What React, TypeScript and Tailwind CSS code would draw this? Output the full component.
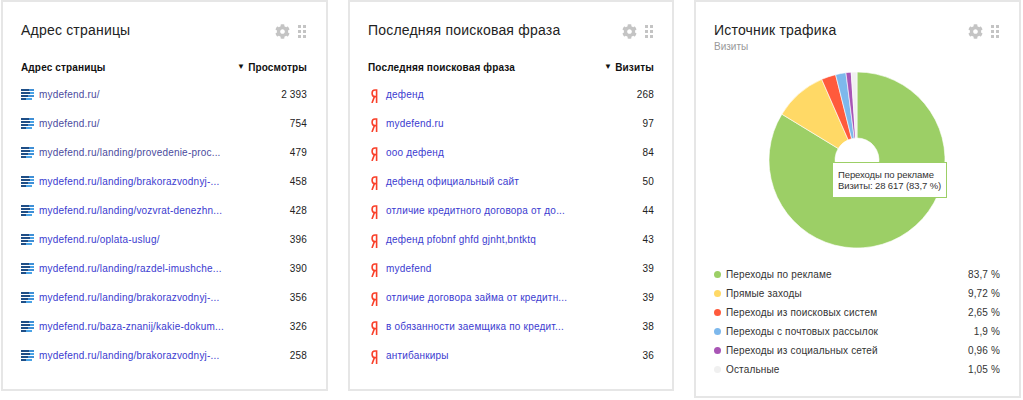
import React from 'react';
import { FaCog } from 'react-icons/fa';

const PAGES = [
  { label: 'mydefend.ru/', value: '2 393', visited: true },
  { label: 'mydefend.ru/', value: '754', visited: true },
  { label: 'mydefend.ru/landing/provedenie-proc...', value: '479', visited: true },
  { label: 'mydefend.ru/landing/brakorazvodnyj-...', value: '458', visited: false },
  { label: 'mydefend.ru/landing/vozvrat-denezhn...', value: '428', visited: false },
  { label: 'mydefend.ru/oplata-uslug/', value: '396', visited: false },
  { label: 'mydefend.ru/landing/razdel-imushche...', value: '390', visited: false },
  { label: 'mydefend.ru/landing/brakorazvodnyj-...', value: '356', visited: false },
  { label: 'mydefend.ru/baza-znanij/kakie-dokum...', value: '326', visited: false },
  { label: 'mydefend.ru/landing/brakorazvodnyj-...', value: '258', visited: false },
];

const PHRASES = [
  { label: 'дефенд', value: '268' },
  { label: 'mydefend.ru', value: '97' },
  { label: 'ооо дефенд', value: '84' },
  { label: 'дефенд официальный сайт', value: '50' },
  { label: 'отличие кредитного договора от до...', value: '44' },
  { label: 'дефенд pfobnf ghfd gjnht,bntktq', value: '43' },
  { label: 'mydefend', value: '39' },
  { label: 'отличие договора займа от кредитн...', value: '39' },
  { label: 'в обязанности заемщика по кредит...', value: '38' },
  { label: 'антибанкиры', value: '36' },
];

const SOURCES = [
  { label: 'Переходы по рекламе', value: '83,7 %', share: 83.7, color: '#9ccf66', dot: 'bg-[#9ccf66]' },
  { label: 'Прямые заходы', value: '9,72 %', share: 9.72, color: '#ffd966', dot: 'bg-[#ffd966]' },
  { label: 'Переходы из поисковых систем', value: '2,65 %', share: 2.65, color: '#ff5a3c', dot: 'bg-[#ff5a3c]' },
  { label: 'Переходы с почтовых рассылок', value: '1,9 %', share: 1.9, color: '#7db8ec', dot: 'bg-[#7db8ec]' },
  { label: 'Переходы из социальных сетей', value: '0,96 %', share: 0.96, color: '#a855b5', dot: 'bg-[#a855b5]' },
  { label: 'Остальные', value: '1,05 %', share: 1.05, color: '#f0f0f0', dot: 'bg-[#f0f0f0]' },
];

const CardTools = () => (
  <div className="flex items-center gap-[8px] mt-[2px] mr-[1px] text-[#c4c4c4]">
    <FaCog className="w-[15px] h-[15px]" />
    <svg width="8" height="13" viewBox="0 0 8 13" fill="currentColor">
      <rect x="0" y="0" width="3" height="3" />
      <rect x="5" y="0" width="3" height="3" />
      <rect x="0" y="5" width="3" height="3" />
      <rect x="5" y="5" width="3" height="3" />
      <rect x="0" y="10" width="3" height="3" />
      <rect x="5" y="10" width="3" height="3" />
    </svg>
  </div>
);

const LinesIcon = () => (
  <svg width="13" height="12" viewBox="0 0 13 12" className="shrink-0 mt-[1px]">
    <rect x="0" y="0" width="8" height="2" fill="#1f4e86" />
    <rect x="8" y="0" width="5" height="2" fill="#3f8fd6" />
    <rect x="0" y="3" width="9" height="2" fill="#1f4e86" />
    <rect x="9" y="3" width="4" height="2" fill="#4aa3e6" />
    <rect x="0" y="6" width="7" height="2" fill="#1f4e86" />
    <rect x="7" y="6" width="6" height="2" fill="#3f8fd6" />
    <rect x="0" y="9" width="5" height="2" fill="#1f4e86" />
    <rect x="5" y="9" width="6" height="2" fill="#4aa3e6" />
  </svg>
);

const YandexIcon = () => (
  <svg width="7" height="14" viewBox="0 0 7 14" className="shrink-0 ml-[3px] mt-[2px]" fill="none" stroke="#f9402a" strokeWidth="1.6">
    <path d="M5.6 14V1H4C2.2 1 1.1 2.2 1.1 4.2S2.2 7.6 4 7.6H5.6M3.4 7.6 1 14" />
  </svg>
);

const Row = ({ icon, label, value, color }: { icon: React.ReactNode; label: string; value: string; color: string }) => (
  <div className="flex items-center justify-between h-[29px]">
    <div className={`flex items-center min-w-0 text-[10px] tracking-[0.2px] ${color}`}>
      <span className="w-[18px] flex shrink-0">{icon}</span>
      <span className="whitespace-nowrap">{label}</span>
    </div>
    <span className="text-[10px] tracking-[0.15px] text-[#222]">{value}</span>
  </div>
);

const TableCard = ({ title, metric, children, className }: { title: string; metric: string; children: React.ReactNode; className: string }) => (
  <section className={`border-2 border-[#e6e6e6] bg-white pt-[19px] pl-[18px] ${className}`}>
    <div className="flex items-center justify-between h-[18px]">
      <h2 className="text-[14px] font-normal text-[#222] tracking-[0.2px]">{title}</h2>
      <CardTools />
    </div>
    <div className="flex items-center justify-between mt-[20px] h-[16px] text-[10px] font-bold text-[#111] tracking-[0.15px]">
      <span>{title}</span>
      <span className="flex items-center gap-[3px]">
        <span className="text-[8px]">▼</span>
        {metric}
      </span>
    </div>
    <div className="mt-[5px]">{children}</div>
  </section>
);

// pie slices go clockwise from twelve o'clock
const polar = (cx: number, cy: number, r: number, pct: number) => {
  const a = (pct / 100) * Math.PI * 2 - Math.PI / 2;
  return [cx + r * Math.cos(a), cy + r * Math.sin(a)];
};

const Pie = () => {
  const total = SOURCES.reduce((s, x) => s + x.share, 0);
  let acc = 0;
  return (
    <svg width="178" height="178" viewBox="0 0 178 178">
      {SOURCES.map((s) => {
        const from = (acc / total) * 100;
        acc += s.share;
        const to = (acc / total) * 100;
        const [x1, y1] = polar(89, 89, 88, from);
        const [x2, y2] = polar(89, 89, 88, to);
        const [x3, y3] = polar(89, 89, 22, to);
        const [x4, y4] = polar(89, 89, 22, from);
        const large = to - from > 50 ? 1 : 0;
        return (
          <path
            key={s.label}
            d={`M${x1} ${y1}A88 88 0 ${large} 1 ${x2} ${y2}L${x3} ${y3}A22 22 0 ${large} 0 ${x4} ${y4}Z`}
            fill={s.color}
            stroke="#fff"
            strokeWidth="0.6"
          />
        );
      })}
    </svg>
  );
};

export default function App() {
  return (
    <div className="w-[1023px] h-[400px] bg-white overflow-hidden flex items-start gap-[20px] pl-[1px] font-['Liberation_Sans',Arial,sans-serif]">
      <TableCard title="Адрес страницы" metric="Просмотры" className="w-[327px] h-[391px] pr-[19px]">
        {PAGES.map((p, i) => (
          <Row key={i} icon={<LinesIcon />} label={p.label} value={p.value} color={p.visited ? 'text-[#4b4b9e]' : 'text-[#3b3bd0]'} />
        ))}
      </TableCard>
      <TableCard title="Последняя поисковая фраза" metric="Визиты" className="w-[326px] h-[391px] pr-[18px]">
        {PHRASES.map((p, i) => (
          <Row key={i} icon={<YandexIcon />} label={p.label} value={p.value} color="text-[#3b3bd0]" />
        ))}
      </TableCard>
      <section className="w-[327px] h-[398px] border-2 border-[#e6e6e6] bg-white pt-[19px] pl-[18px] pr-[19px]">
        <div className="flex items-center justify-between h-[18px]">
          <h2 className="text-[14px] font-normal text-[#222] tracking-[0.2px]">Источник трафика</h2>
          <CardTools />
        </div>
        <div className="text-[10px] text-[#999] mt-[1px] h-[14px] leading-[14px]">Визиты</div>
        <div className="relative flex justify-center mt-[17px] h-[178px]">
          <Pie />
          <div className="absolute left-[118px] top-[91px] w-[115px] h-[36px] bg-white border border-[#9ccf66] pl-[5px] pt-[6px] text-[9.5px] tracking-[-0.1px] leading-[11px] text-[#333] whitespace-nowrap">
            <div>Переходы по рекламе</div>
            <div>Визиты: 28 617 (83,7 %)</div>
          </div>
        </div>
        <div className="mt-[16px]">
          {SOURCES.map((s) => (
            <div key={s.label} className="flex items-center justify-between h-[19px] text-[10px] tracking-[0.15px] text-[#333]">
              <div className="flex items-center gap-[5px]">
                <span className={`w-[7px] h-[7px] rounded-full ${s.dot}`} />
                <span>{s.label}</span>
              </div>
              <span>{s.value}</span>
            </div>
          ))}
        </div>
      </section>
    </div>
  );
}
